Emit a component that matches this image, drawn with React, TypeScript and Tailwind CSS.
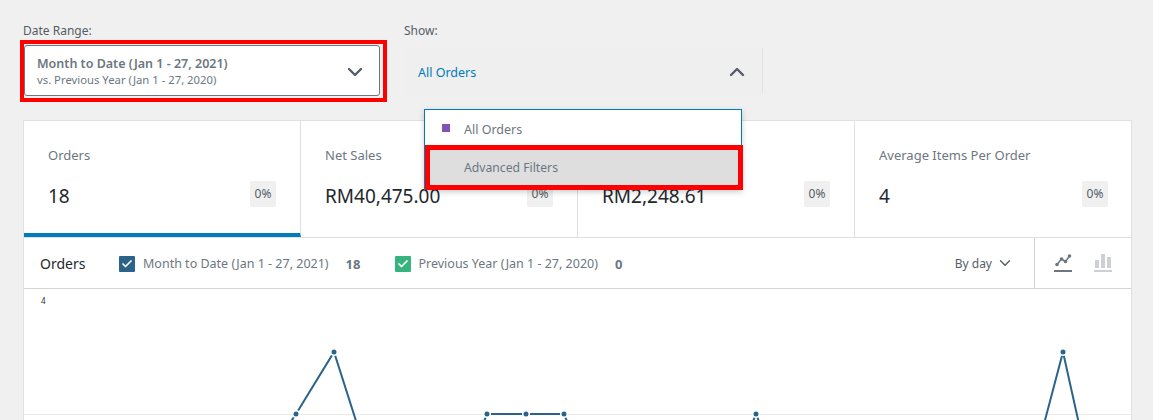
import { Check, ChevronDown, ChevronUp } from "lucide-react";

const font = { fontFamily: '"Noto Sans", sans-serif' };

function Tile({
    label,
    value,
    active,
    last,
}: {
    label: string;
    value: string;
    active?: boolean;
    last?: boolean;
}) {
    return (
        <div
            className={`relative w-[277px] h-[116px] shrink-0 pl-6 pr-6 pt-[24px] ${
                last ? "w-[277px]" : "border-r border-[#e0e0e0]"
            } ${active ? "border-b-4 border-b-[#007cba]" : ""}`}
        >
            <div className="text-[13px] leading-[20px] text-[#6c7781]">{label}</div>
            <div className="mt-[15px] flex items-start justify-between">
                <span className="pt-px text-[19px] leading-[30px] text-[#23282d]">{value}</span>
                <span className="mt-px w-[26px] h-[26px] rounded-[2px] bg-[#f0f0f0] text-[12px] text-[#555d66] flex items-center justify-center">
                    0%
                </span>
            </div>
        </div>
    );
}

function Legend({
    color,
    label,
    total,
    labelClass,
}: {
    color: string;
    label: string;
    total: string;
    labelClass: string;
}) {
    return (
        <div className="flex items-center">
            <span className={`w-4 h-4 rounded-[1px] flex items-center justify-center ${color}`}>
                <Check size={12} strokeWidth={3.5} color="#fff" />
            </span>
            <span className={`pt-[2px] text-[12.5px] text-[#6c7781] ${labelClass}`}>{label}</span>
            <span className="ml-[17px] pt-[2px] text-[13px] font-bold text-[#6c7781]">{total}</span>
        </div>
    );
}

function App() {
    return (
        <div className="h-[420px] w-[1153px] overflow-hidden bg-[#f0f0f0]" style={font}>
            {/* Filters */}
            <div className="flex h-[120px] pl-[23px] pt-[23px]">
                <div className="w-[381px]">
                    <div className="text-[12px] leading-[16px] text-[#555d66]">Date Range:</div>
                    <div className="relative ml-px mt-[6px] w-[356px] h-[51px] bg-white border border-[#6c7781] rounded-[3px] pl-3 pt-[9px]">
                        <div className="text-[12.5px] leading-[17px] font-semibold text-[#6c7781]">
                            Month to Date (Jan 1 - 27, 2021)
                        </div>
                        <div className="text-[11.3px] leading-[16px] text-[#6c7781]">
                            vs. Previous Year (Jan 1 - 27, 2020)
                        </div>
                        <ChevronDown
                            className="absolute right-[12px] top-[14px]"
                            size={24}
                            strokeWidth={2.4}
                            color="#555d66"
                        />
                        <div className="absolute left-[-5px] right-[-8px] top-[-6px] bottom-[-7px] border-4 border-[#ff0000]" />
                    </div>
                </div>
                <div className="w-[359px]">
                    <div className="text-[12px] leading-[16px] text-[#555d66]">Show:</div>
                    <div className="relative ml-px mt-[9px] h-[48px] bg-[#efefef] flex items-center justify-between pl-[13px] pr-[14px]">
                        <span className="pt-[2px] text-[12.5px] text-[#007cba]">All Orders</span>
                        <ChevronUp size={24} strokeWidth={2.4} color="#555d66" />
                        <span className="absolute right-0 top-0 h-[45px] w-px bg-[#dde3e8]" />
                    </div>
                    {/* Open menu */}
                    <div className="relative z-10 ml-[20px] mt-[13px] w-[318px] bg-white border border-[#007cba] border-b-0 shadow-[0_2px_6px_rgba(0,0,0,0.2)]">
                        <div className="h-[35px] pt-[5px] flex items-center text-[12.5px] text-[#6c7781]">
                            <span className="ml-[17px] mb-[5px] w-2 h-2 bg-[#7f54b3]" />
                            <span className="ml-[14px]">All Orders</span>
                        </div>
                        <div className="relative h-[45px] pt-[2px] bg-[#dedede] flex items-center text-[12.2px] text-[#6c7781]">
                            <span className="ml-[39px]">Advanced Filters</span>
                            <div className="absolute left-0 right-[-2px] top-0 bottom-0 border-[5px] border-[#ff0000]" />
                        </div>
                    </div>
                </div>
            </div>

            {/* Report card */}
            <div className="ml-[23px] w-[1109px] h-[300px] bg-white border border-[#e0e0e0] border-b-0">
                <div className="flex border-b border-[#e0e0e0]">
                    <Tile label="Orders" value="18" active />
                    <Tile label="Net Sales" value="RM40,475.00" />
                    <Tile label="Average Order Value" value="RM2,248.61" />
                    <Tile label="Average Items Per Order" value="4" last />
                </div>

                <div className="flex h-[51px] items-center border-b border-[#d5d5d5]">
                    <div className="ml-4 w-[79px] text-[14px] text-[#23282d]">Orders</div>
                    <div className="flex gap-[35px] pt-px">
                        <Legend color="bg-[#2c6389]" labelClass="ml-2" label="Month to Date (Jan 1 - 27, 2021)" total="18" />
                        <Legend color="bg-[#36b37e]" labelClass="ml-[7px]" label="Previous Year (Jan 1 - 27, 2020)" total="0" />
                    </div>
                    <div className="ml-auto flex items-center h-full">
                        <span className="pt-[2px] text-[12px] text-[#555d66]">By day</span>
                        <ChevronDown className="ml-[4px]" size={18} strokeWidth={1.8} color="#555d66" />
                        <div className="ml-[20px] h-full w-[97px] border-l border-[#d5d5d5] flex items-center gap-[22px] pl-[19px]">
                            <svg width="18" height="20" viewBox="0 0 18 20" fill="none">
                                <path d="M3 11.5 L7.5 6 L11.5 8.5 L15.5 3" stroke="#6c7781" strokeWidth="1.5" />
                                <circle cx="3" cy="11.5" r="1.8" fill="#6c7781" />
                                <circle cx="7.5" cy="6" r="1.8" fill="#6c7781" />
                                <circle cx="11.5" cy="8.5" r="1.8" fill="#6c7781" />
                                <circle cx="15.5" cy="3" r="1.8" fill="#6c7781" />
                                <rect x="0" y="17" width="18" height="2" fill="#6c7781" />
                            </svg>
                            <svg width="18" height="20" viewBox="0 0 18 20" fill="#ccd0d4">
                                <rect x="1" y="7" width="4" height="8" />
                                <rect x="7" y="1" width="4" height="14" />
                                <rect x="13" y="4" width="4" height="11" />
                                <rect x="0" y="17" width="18" height="2" />
                            </svg>
                        </div>
                    </div>
                </div>

                <div className="relative h-[131px]">
                    <span className="absolute left-[17px] top-[7px] text-[8px] leading-[10px] text-[#23282d]">4</span>
                    <svg className="block" width="1107" height="131" viewBox="0 0 1107 131" fill="none">
                        <path d="M0 125.5 H1107" stroke="#ececec" />
                        <g stroke="#2c6389" strokeWidth="2">
                            <path d="M262 140 L272 125 L310 63 L333 135" />
                            <path d="M457 140 L463 125 H502 H540 L546 140" />
                            <path d="M726 140 L732 125 L738 140" />
                            <path d="M1020 135 L1039 63 L1055 135" />
                        </g>
                        {[
                            [272, 125],
                            [310, 63],
                            [463, 125],
                            [502, 125],
                            [540, 125],
                            [732, 125],
                            [1039, 63],
                        ].map(([x, y]) => (
                            <circle key={x} cx={x} cy={y} r="3.25" fill="#2c6389" stroke="#fff" strokeWidth="1.5" />
                        ))}
                    </svg>
                </div>
            </div>
        </div>
    );
}

export default App;
